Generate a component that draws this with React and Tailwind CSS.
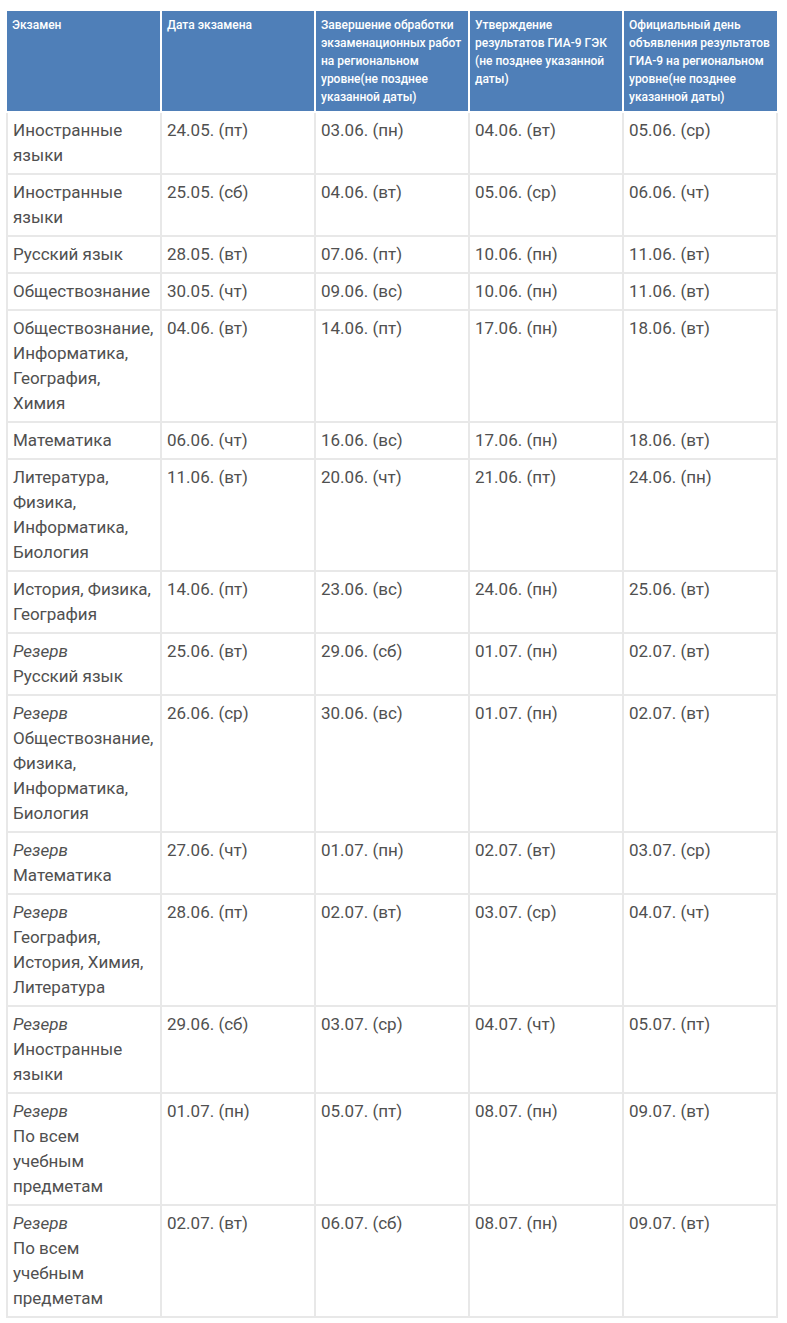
import React from "react";

const rows = [
  [null, ["Иностранные", "языки"], "24.05. (пт)", "03.06. (пн)", "04.06. (вт)", "05.06. (ср)"],
  [null, ["Иностранные", "языки"], "25.05. (сб)", "04.06. (вт)", "05.06. (ср)", "06.06. (чт)"],
  [null, ["Русский язык"], "28.05. (вт)", "07.06. (пт)", "10.06. (пн)", "11.06. (вт)"],
  [null, ["Обществознание"], "30.05. (чт)", "09.06. (вс)", "10.06. (пн)", "11.06. (вт)"],
  [null, ["Обществознание,", "Информатика,", "География,", "Химия"], "04.06. (вт)", "14.06. (пт)", "17.06. (пн)", "18.06. (вт)"],
  [null, ["Математика"], "06.06. (чт)", "16.06. (вс)", "17.06. (пн)", "18.06. (вт)"],
  [null, ["Литература,", "Физика,", "Информатика,", "Биология"], "11.06. (вт)", "20.06. (чт)", "21.06. (пт)", "24.06. (пн)"],
  [null, ["История, Физика,", "География"], "14.06. (пт)", "23.06. (вс)", "24.06. (пн)", "25.06. (вт)"],
  ["Резерв", ["Русский язык"], "25.06. (вт)", "29.06. (сб)", "01.07. (пн)", "02.07. (вт)"],
  ["Резерв", ["Обществознание,", "Физика,", "Информатика,", "Биология"], "26.06. (ср)", "30.06. (вс)", "01.07. (пн)", "02.07. (вт)"],
  ["Резерв", ["Математика"], "27.06. (чт)", "01.07. (пн)", "02.07. (вт)", "03.07. (ср)"],
  ["Резерв", ["География,", "История, Химия,", "Литература"], "28.06. (пт)", "02.07. (вт)", "03.07. (ср)", "04.07. (чт)"],
  ["Резерв", ["Иностранные", "языки"], "29.06. (сб)", "03.07. (ср)", "04.07. (чт)", "05.07. (пт)"],
  ["Резерв", ["По всем", "учебным", "предметам"], "01.07. (пн)", "05.07. (пт)", "08.07. (пн)", "09.07. (вт)"],
  ["Резерв", ["По всем", "учебным", "предметам"], "02.07. (вт)", "06.07. (сб)", "08.07. (пн)", "09.07. (вт)"],
];

const headers = [
  ["Экзамен"],
  ["Дата экзамена"],
  ["Завершение обработки", "экзаменационных работ", "на региональном", "уровне(не позднее", "указанной даты)"],
  ["Утверждение", "результатов ГИА-9 ГЭК", "(не позднее указанной", "даты)"],
  ["Официальный день", "объявления результатов", "ГИА-9 на региональном", "уровне(не позднее", "указанной даты)"],
];

export default function App() {
  return (
    <div className="bg-white min-h-[1323px] pt-[11px] pl-[6px]" style={{ fontFamily: "Roboto, 'Open Sans', sans-serif" }}>
      <table className="border-collapse table-fixed w-[770px]">
        <colgroup>
          <col className="w-[154px]" />
          <col className="w-[154px]" />
          <col className="w-[154px]" />
          <col className="w-[154px]" />
          <col className="w-[154px]" />
        </colgroup>
        <thead>
          <tr className="bg-[#4f7fb8]">
            {headers.map((h, i) => (
              <th
                key={i}
                className="border-2 border-white border-t-0 first:border-l-0 last:border-r-0 align-top text-left px-[5px] pt-[5px] pb-[5px] text-[12px] leading-[18px] font-medium text-white whitespace-nowrap"
              >
                {h.map((l, k) => (
                  <div key={k}>{l}</div>
                ))}
              </th>
            ))}
          </tr>
        </thead>
        <tbody>
          {rows.map((r, i) => (
            <tr key={i}>
              <td className="border-2 border-[#e8e8e8] align-top px-[5px] py-[5px] text-[17px] leading-[25px] text-[#505050] whitespace-nowrap">
                {r[0] && <div className="italic">{r[0]}</div>}
                {r[1].map((l, k) => (
                  <div key={k}>{l}</div>
                ))}
              </td>
              {r.slice(2).map((c, j) => (
                <td key={j} className="border-2 border-[#e8e8e8] align-top px-[5px] py-[5px] text-[17px] leading-[25px] text-[#505050] whitespace-nowrap">
                  {c}
                </td>
              ))}
            </tr>
          ))}
        </tbody>
      </table>
    </div>
  );
}
